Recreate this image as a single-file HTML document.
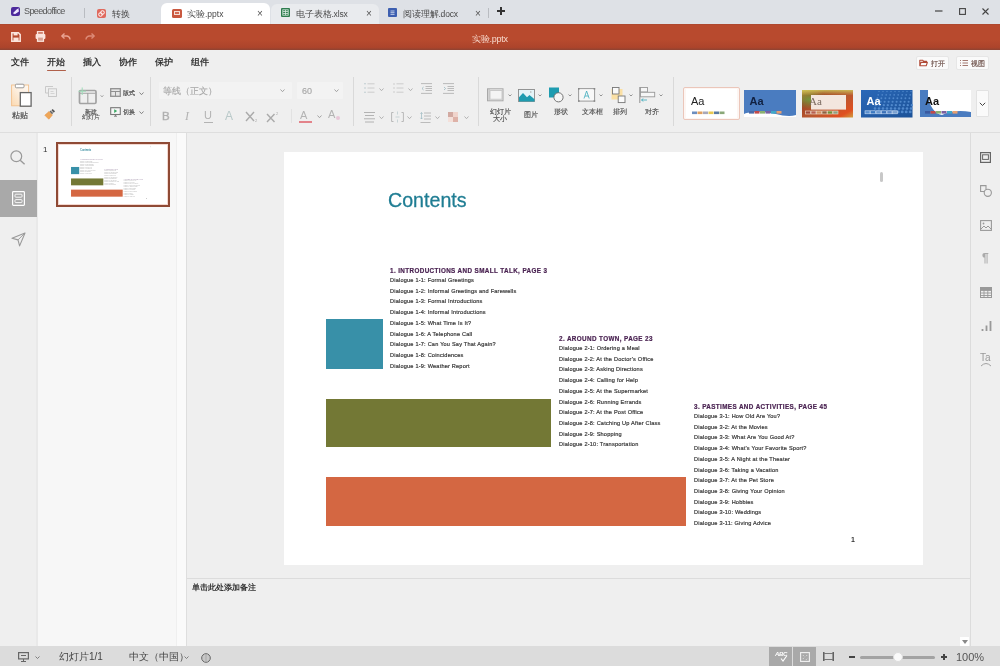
<!DOCTYPE html>
<html><head><meta charset="utf-8">
<style>
*{box-sizing:border-box;margin:0;padding:0}
html,body{width:1000px;height:666px;overflow:hidden;background:#efefef;font-family:"Liberation Sans",sans-serif;position:relative}
.a{position:absolute}
svg{position:absolute;overflow:visible}
/* tab bar */
#tabbar{left:0;top:0;width:1000px;height:24px;background:#dee1e6}
.tt{font-size:8.5px;color:#4a4a4a;white-space:nowrap;line-height:12px}
.x{font-size:10px;color:#555;line-height:10px}
#red{left:0;top:24px;width:1000px;height:26px;background:linear-gradient(#a44630 0,#b84a2e 1px,#b84a2e 60%,#ac442b 90%,#8e4332 100%)}
#ribbon{left:0;top:50px;width:1000px;height:83px;background:#efefef;border-bottom:1px solid #dedede}
.menu{font-size:9.3px;color:#262626;top:55.5px;line-height:12px;-webkit-text-stroke:0.25px #262626}
.rt{font-size:8px;color:#505050;line-height:8px;white-space:nowrap;-webkit-text-stroke:0.15px currentColor}
.sep{width:1px;background:#d9d9d9}
.sh{font-size:6.3px;line-height:8px;font-weight:bold;letter-spacing:0.39px;color:#4a2352;white-space:nowrap;-webkit-text-stroke:0.2px #4a2352}
.sl{font-size:5.6px;line-height:10.7px;letter-spacing:0.2px;color:#3a3a3a;white-space:nowrap;-webkit-text-stroke:0.2px #3a3a3a}
.thumb .sl{color:#a8a8a8;-webkit-text-stroke:0}
.thumb .sh{color:#a898b0;-webkit-text-stroke:0}
.thumb .ct{color:#6aaebe;-webkit-text-stroke:0}
.chev{font-size:7px;color:#777}
</style></head><body><div id="root" class="a" style="left:0;top:0;width:1000px;height:666px;will-change:transform">
<!-- TAB BAR -->
<div id="tabbar" class="a"></div>
<!-- speedoffice tab -->
<div class="a" style="left:11px;top:7px;width:9px;height:9px;border-radius:2px;background:#4d2a9c"></div><svg style="left:11px;top:7px" width="9" height="9"><path d="M2.5 6.5L6.5 2.5M3.5 6.8l3.5-4.5 0.3 2z" stroke="#f0e8ff" stroke-width="1.1" fill="#f0e8ff"/></svg>
<div class="a tt" style="left:24px;top:5px;font-size:9px;letter-spacing:-0.6px;color:#555">Speedoffice</div>
<div class="a" style="left:84px;top:8px;width:1px;height:10px;background:#b9bcc1"></div>
<!-- 转换 -->
<div class="a" style="left:97px;top:9px;width:9px;height:9px;border-radius:2px;background:#e06a5e"></div><svg style="left:97px;top:9px" width="9" height="9"><circle cx="3.5" cy="5.5" r="1.8" fill="none" stroke="#fff" stroke-width="1"/><circle cx="5.5" cy="3.5" r="1.8" fill="none" stroke="#fff" stroke-width="1"/></svg>
<div class="a tt" style="left:112px;top:7.5px">转换</div>
<!-- active tab -->
<div class="a" style="left:161px;top:3px;width:109px;height:21px;background:#fff;border-radius:6px 6px 0 0"></div>
<div class="a" style="left:172px;top:8.5px;width:9.5px;height:9px;border-radius:1.5px;background:#c9583f"></div>
<div class="a" style="left:174px;top:10.5px;width:5.5px;height:4.5px;background:#d46a52;border:1px solid #f6ddd5"></div>
<div class="a tt" style="left:187px;top:7.5px">实验.pptx</div>
<div class="a x" style="left:257px;top:9px">×</div>
<!-- xlsx tab hover -->
<div class="a" style="left:271px;top:4px;width:108px;height:20px;background:#e9ebee;border-radius:6px 6px 0 0"></div>
<div class="a" style="left:281px;top:8px;width:9px;height:9px;border-radius:1px;background:#2f7d4f"></div><svg style="left:281px;top:8px" width="9" height="9"><path d="M2 3.5h5M2 5.5h5M4.5 2v5" stroke="#d8eadf" stroke-width="0.8"/><rect x="1.8" y="1.8" width="5.4" height="5.4" fill="none" stroke="#d8eadf" stroke-width="0.8"/></svg>
<div class="a tt" style="left:296px;top:7.5px;letter-spacing:-0.15px">电子表格.xlsx</div>
<div class="a x" style="left:366px;top:9px">×</div>
<!-- docx tab -->
<div class="a" style="left:388px;top:8px;width:9px;height:9px;border-radius:1px;background:#3d5fb0"></div><svg style="left:388px;top:8px" width="9" height="9"><path d="M2.5 3h4M2.5 4.7h4M2.5 6.4h4" stroke="#e0e6f4" stroke-width="0.8"/></svg>
<div class="a tt" style="left:403px;top:7.5px;letter-spacing:-0.15px">阅读理解.docx</div>
<div class="a x" style="left:475px;top:9px">×</div>
<div class="a" style="left:488px;top:8px;width:1px;height:10px;background:#b9bcc1"></div>
<div class="a" style="left:497px;top:10px;width:8px;height:1.6px;background:#333"></div><div class="a" style="left:500.2px;top:6.8px;width:1.6px;height:8px;background:#333"></div>
<!-- window controls -->
<svg style="left:934.5px;top:9.5px" width="8" height="2" viewBox="0 0 8 2"><path d="M0 1h7.5" stroke="#444" stroke-width="1.2"/></svg>
<svg style="left:958.5px;top:7.5px" width="7" height="7" viewBox="0 0 7 7"><rect x="0.6" y="0.6" width="5.8" height="5.8" fill="none" stroke="#444" stroke-width="1.1"/></svg>
<svg style="left:982px;top:7.5px" width="7" height="7" viewBox="0 0 7 7"><path d="M0.5 0.5l6 6M6.5 0.5l-6 6" stroke="#444" stroke-width="1.1"/></svg>
<!-- RED BAR -->
<div id="red" class="a"></div>
<div class="a" style="left:472px;top:32.5px;font-size:9px;letter-spacing:-0.25px;color:#f7d9cc;line-height:12px">实验.pptx</div>


<svg style="left:11px;top:32px" width="10" height="10" viewBox="0 0 10 10"><path d="M0.8 0.8h6.6l1.8 1.8v6.6H0.8z" fill="none" stroke="#fbe4dc" stroke-width="1.5"/><rect x="2.6" y="0.8" width="4" height="2.6" fill="#fbe4dc"/><rect x="2.4" y="5.6" width="5.2" height="3.6" fill="#fbe4dc"/></svg>
<svg style="left:35px;top:31px" width="11" height="11" viewBox="0 0 11 11"><rect x="2.5" y="0.7" width="6" height="2.5" fill="none" stroke="#fbe4dc" stroke-width="1.3"/><rect x="0.6" y="3" width="9.8" height="5" rx="1" fill="#fbe4dc"/><rect x="2.5" y="6" width="6" height="4.3" fill="#d8a090" stroke="#fbe4dc" stroke-width="1.2"/></svg>
<svg style="left:61px;top:33px" width="10" height="7" viewBox="0 0 10 7"><path d="M3.5 0.5L0.8 3 3.5 5.5" fill="none" stroke="#eaa594" stroke-width="1.4" stroke-linejoin="round"/><path d="M1 3h4.5a3.5 3.5 0 0 1 3.5 3.5" fill="none" stroke="#eaa594" stroke-width="1.4"/></svg>
<svg style="left:84.5px;top:33px" width="10" height="7" viewBox="0 0 10 7"><path d="M6.5 0.5L9.2 3 6.5 5.5" fill="none" stroke="#dd8c78" stroke-width="1.4" stroke-linejoin="round"/><path d="M9 3H4.5A3.5 3.5 0 0 0 1 6.5" fill="none" stroke="#dd8c78" stroke-width="1.4"/></svg>

<!-- RIBBON -->
<div id="ribbon" class="a"></div>
<div class="a menu" style="left:11px">文件</div>
<div class="a menu" style="left:46.8px">开始</div>
<div class="a" style="left:47px;top:69.8px;width:18.5px;height:1.6px;background:#b0604a;border-radius:1px"></div>
<div class="a menu" style="left:83.3px">插入</div>
<div class="a menu" style="left:119px">协作</div>
<div class="a menu" style="left:154.8px">保护</div>
<div class="a menu" style="left:191px">组件</div>


<!-- right buttons -->
<div class="a" style="left:916px;top:56px;width:33px;height:14px;background:#fafafa;border:1px solid #e6e6e6;border-radius:2px"></div>
<svg style="left:919px;top:58.5px" width="9" height="8" viewBox="0 0 9 8"><path d="M0.8 6.8V1.2h2.8l1 1.2h3v1.2M0.8 6.8h6.4l1.2-3.4H2z" fill="none" stroke="#b04a36" stroke-width="1.1" stroke-linejoin="round"/></svg>
<div class="a rt" style="left:931px;top:59.5px;font-size:7.3px;color:#6a4d46">打开</div>
<div class="a" style="left:956px;top:56px;width:33px;height:14px;background:#fafafa;border:1px solid #e6e6e6;border-radius:2px"></div>
<svg style="left:960px;top:58.5px" width="8" height="8" viewBox="0 0 8 8"><path d="M0 1.5h1M2.5 1.5H8M0 4h1M2.5 4H8M0 6.5h1M2.5 6.5H8" stroke="#9a6a60" stroke-width="0.9"/></svg>
<div class="a rt" style="left:971px;top:59.5px;font-size:7.3px;color:#6a4d46">视图</div>

<!-- clipboard group -->
<svg style="left:10px;top:83px" width="23" height="25" viewBox="0 0 23 25">
 <defs><linearGradient id="cb" x1="0" y1="1" x2="1" y2="0"><stop offset="0" stop-color="#fbd9b0"/><stop offset="0.6" stop-color="#fdf1e4"/><stop offset="1" stop-color="#fff8f0"/></linearGradient></defs>
 <rect x="1.6" y="2" width="17" height="20.8" fill="url(#cb)" stroke="#f2c08c" stroke-width="0.9"/>
 <rect x="5.4" y="1.2" width="8.6" height="3.6" rx="1" fill="#fff" stroke="#999" stroke-width="1"/>
 <rect x="10.3" y="9.6" width="10.8" height="13.6" fill="#fff" stroke="#666" stroke-width="1.3"/>
</svg>
<div class="a rt" style="left:12px;top:111px;font-size:8px;line-height:10px;color:#444;-webkit-text-stroke:0.15px #444">粘贴</div>
<svg style="left:45px;top:86px" width="12" height="11" viewBox="0 0 12 11"><path d="M8 0.5H0.5V7H3" fill="none" stroke="#c4c4c4" stroke-width="0.9"/><rect x="3.5" y="2.8" width="8" height="7.7" fill="none" stroke="#c4c4c4" stroke-width="0.9"/><path d="M5.5 5.5h3M5.5 7.5h4" stroke="#c8c8c8" stroke-width="0.7"/></svg>
<svg style="left:44px;top:108px" width="12" height="12" viewBox="0 0 12 12"><path d="M0.8 7.2L5 3.6 8.4 7 4.8 11.2z" fill="#eea658" stroke="#e69446" stroke-width="0.6"/><path d="M6 3l2.6 2.6" stroke="#666" stroke-width="1.6"/><path d="M8 1.6l2.4 2.4" stroke="#555" stroke-width="1.8"/></svg>
<div class="a sep" style="left:71px;top:77px;height:49px"></div>

<!-- slide group -->
<svg style="left:78px;top:87px" width="20" height="18" viewBox="0 0 20 18">
 <rect x="1.5" y="3.5" width="16.5" height="13" rx="1.2" fill="#efefef" stroke="#a2a2a2" stroke-width="1.7"/>
 <path d="M2 6.2h15.5M9.8 6.2v10" stroke="#a2a2a2" stroke-width="1.1"/>
 <path d="M4.2 0.5v7.5M0.5 4.2h7.5" stroke="#9ddcb8" stroke-width="1"/>
</svg>
<div class="a rt" style="left:84.5px;top:107.5px;font-size:6.3px;line-height:7px;color:#555;-webkit-text-stroke:0.15px #555">新建</div><div class="a rt" style="left:81.5px;top:113.3px;font-size:6.3px;line-height:7px;color:#555;-webkit-text-stroke:0.15px #555">幻灯片</div>
<svg style="left:110px;top:88px" width="11" height="9" viewBox="0 0 11 9"><rect x="0.7" y="0.7" width="9.6" height="7.6" fill="#e6e6e6" stroke="#909090" stroke-width="1.3"/><path d="M1 3.5h9M5.5 3.5v4.5" stroke="#909090" stroke-width="1"/></svg>
<div class="a rt" style="left:122.5px;top:89px;font-size:6.4px;line-height:8px;color:#555;-webkit-text-stroke:0.2px #555">版式</div>
<svg style="left:110px;top:107px" width="11" height="10" viewBox="0 0 11 10"><rect x="0.7" y="0.7" width="9.6" height="6.8" fill="#f6f6f6" stroke="#777" stroke-width="1.1"/><path d="M4.2 2.2l3 1.9-3 1.9z" fill="#3aa864"/><path d="M5.5 7.5v1.5M4 9.2h3" stroke="#777" stroke-width="0.9"/></svg>
<div class="a rt" style="left:122.5px;top:108px;font-size:6.4px;line-height:8px;color:#555;-webkit-text-stroke:0.2px #555">切换</div>
<svg style="left:99.5px;top:94.5px" width="4" height="2.2" viewBox="0 0 4 2.2"><path d="M0.5 0.5L2.0 1.7L3.5 0.5" fill="none" stroke="#999" stroke-width="0.9"/></svg>
<svg style="left:138.5px;top:91.5px" width="5" height="3.2" viewBox="0 0 5 3.2"><path d="M0.5 0.5L2.5 2.7L4.5 0.5" fill="none" stroke="#777" stroke-width="0.9"/></svg>
<svg style="left:138.5px;top:111px" width="5" height="3.2" viewBox="0 0 5 3.2"><path d="M0.5 0.5L2.5 2.7L4.5 0.5" fill="none" stroke="#777" stroke-width="0.9"/></svg>
<div class="a sep" style="left:150px;top:77px;height:49px"></div>

<!-- font group -->
<div class="a" style="left:159px;top:82px;width:133px;height:17px;background:#f3f3f3;border-radius:1px"></div>
<div class="a rt" style="left:163px;top:86px;font-size:9px;line-height:10px;color:#a8a8a8">等线（正文）</div>
<svg style="left:280px;top:89px" width="5" height="3.2" viewBox="0 0 5 3.2"><path d="M0.5 0.5L2.5 2.7L4.5 0.5" fill="none" stroke="#999" stroke-width="0.9"/></svg>
<div class="a" style="left:297px;top:82px;width:46px;height:17px;background:#f3f3f3;border-radius:1px"></div>
<div class="a rt" style="left:302px;top:86px;font-size:9px;line-height:10px;color:#a8a8a8">60</div>
<svg style="left:334px;top:89px" width="5" height="3.2" viewBox="0 0 5 3.2"><path d="M0.5 0.5L2.5 2.7L4.5 0.5" fill="none" stroke="#999" stroke-width="0.9"/></svg>
<div class="a" style="left:162px;top:110px;font-size:11.5px;line-height:13px;color:#b0b0b0;font-weight:normal;-webkit-text-stroke:0.4px #b0b0b0">B</div>
<div class="a" style="left:185px;top:110px;font-size:12px;line-height:13px;color:#b3b3b3;font-family:'Liberation Serif',serif;font-style:italic">I</div>
<div class="a" style="left:204px;top:109px;font-size:11px;line-height:13px;color:#b3b3b3">U</div>
<div class="a" style="left:204px;top:122px;width:9px;height:1px;background:#b3b3b3"></div>
<div class="a" style="left:225px;top:110px;font-size:12px;line-height:13px;color:#b9c9c9">A</div>
<svg style="left:245px;top:111px" width="14" height="12" viewBox="0 0 14 12"><path d="M1 1l8 9M9 1l-8 9" stroke="#aaa" stroke-width="1.4"/><text x="10" y="11" font-size="4" fill="#aaa" font-family="Liberation Sans">2</text></svg>
<svg style="left:266px;top:111px" width="14" height="12" viewBox="0 0 14 12"><path d="M1 3l7.5 8M8.5 3l-7.5 8" stroke="#aaa" stroke-width="1.4"/><text x="10" y="4" font-size="4" fill="#aaa" font-family="Liberation Sans">2</text></svg>
<div class="a sep" style="left:291px;top:109px;height:14px;background:#e2e2e2"></div>
<div class="a" style="left:300px;top:109px;font-size:11px;line-height:12px;color:#b3b3b3">A</div>
<div class="a" style="left:299px;top:121px;width:13px;height:2px;background:#e3838a"></div>
<svg style="left:316.5px;top:115px" width="5" height="3.2" viewBox="0 0 5 3.2"><path d="M0.5 0.5L2.5 2.7L4.5 0.5" fill="none" stroke="#999" stroke-width="0.9"/></svg>
<div class="a" style="left:328px;top:108px;font-size:11px;line-height:12px;color:#b3b3b3">A</div>
<div class="a" style="left:336px;top:116px;width:4px;height:4px;border-radius:2px;background:#e8c8d8"></div>
<div class="a sep" style="left:353px;top:77px;height:49px"></div>

<!-- paragraph group -->
<svg style="left:364px;top:83px" width="11" height="10" viewBox="0 0 11 10"><path d="M3.5 0.8h7M3.5 5h7M3.5 9.2h7" stroke="#c4c4c4" stroke-width="0.8"/><circle cx="1" cy="0.8" r="0.8" fill="#b8c8cc"/><circle cx="1" cy="5" r="0.8" fill="#b8c8cc"/><circle cx="1" cy="9.2" r="0.8" fill="#b8c8cc"/></svg>
<svg style="left:393px;top:83px" width="11" height="10" viewBox="0 0 11 10"><path d="M3.5 0.8h7M3.5 5h7M3.5 9.2h7" stroke="#c4c4c4" stroke-width="0.8"/><path d="M1 0v2M1 4v2M1 8v2" stroke="#c0c0c0" stroke-width="0.7"/></svg>
<svg style="left:421px;top:83px" width="11" height="11" viewBox="0 0 11 11"><path d="M0 0.6h11M4.5 3.5h6.5M4.5 5.5h6.5M4.5 7.5h6.5M0 10.4h11" stroke="#b4b4b4" stroke-width="0.9"/><path d="M2.6 4L1 5.5 2.6 7" fill="none" stroke="#9ab8c0" stroke-width="0.8"/></svg>
<svg style="left:443px;top:83px" width="11" height="11" viewBox="0 0 11 11"><path d="M0 0.6h11M4.5 3.5h6.5M4.5 5.5h6.5M4.5 7.5h6.5M0 10.4h11" stroke="#b4b4b4" stroke-width="0.9"/><path d="M1 4L2.6 5.5 1 7" fill="none" stroke="#9ab8c0" stroke-width="0.8"/></svg>
<svg style="left:363px;top:112px" width="13" height="11" viewBox="0 0 13 11"><path d="M1 0.5h11M2 3.5h9M1 6.8h11M2 10h9" stroke="#ababab" stroke-width="0.9"/></svg>
<svg style="left:391px;top:111px" width="13" height="12" viewBox="0 0 13 12"><path d="M2.5 1.5H0.6v9h1.9M10.5 1.5h1.9v9h-1.9" fill="none" stroke="#b8b8b8" stroke-width="1"/><path d="M6.5 0.5v3M6.5 8.5v3M4.5 6h4" stroke="#b8c8cc" stroke-width="0.7"/></svg>
<svg style="left:420px;top:112px" width="11" height="11" viewBox="0 0 11 11"><path d="M4 1h7M4 4h7M4 7h7M0.5 10.5h10" stroke="#b4b4b4" stroke-width="0.9"/><path d="M1.5 0.5v6.5M0.4 1.8l1.1-1.2 1.1 1.2M0.4 5.8l1.1 1.2 1.1-1.2" fill="none" stroke="#9ab8c0" stroke-width="0.7"/></svg>
<svg style="left:448px;top:112px" width="11" height="11" viewBox="0 0 11 11"><rect x="0" y="0" width="5" height="5" fill="#d2aaa2"/><rect x="5" y="0" width="5" height="5" fill="#f0d4cc"/><rect x="0" y="5" width="5" height="5" fill="#f4e0da"/><rect x="5" y="5" width="5" height="5" fill="#deb2a8"/></svg>
<svg style="left:378.5px;top:87.5px" width="5" height="3.2" viewBox="0 0 5 3.2"><path d="M0.5 0.5L2.5 2.7L4.5 0.5" fill="none" stroke="#aaa" stroke-width="0.9"/></svg>
<svg style="left:407.5px;top:87.5px" width="5" height="3.2" viewBox="0 0 5 3.2"><path d="M0.5 0.5L2.5 2.7L4.5 0.5" fill="none" stroke="#aaa" stroke-width="0.9"/></svg>
<svg style="left:378.5px;top:116px" width="5" height="3.2" viewBox="0 0 5 3.2"><path d="M0.5 0.5L2.5 2.7L4.5 0.5" fill="none" stroke="#aaa" stroke-width="0.9"/></svg>
<svg style="left:407px;top:116px" width="5" height="3.2" viewBox="0 0 5 3.2"><path d="M0.5 0.5L2.5 2.7L4.5 0.5" fill="none" stroke="#aaa" stroke-width="0.9"/></svg>
<svg style="left:435px;top:116px" width="5" height="3.2" viewBox="0 0 5 3.2"><path d="M0.5 0.5L2.5 2.7L4.5 0.5" fill="none" stroke="#aaa" stroke-width="0.9"/></svg>
<svg style="left:463.5px;top:116px" width="5" height="3.2" viewBox="0 0 5 3.2"><path d="M0.5 0.5L2.5 2.7L4.5 0.5" fill="none" stroke="#aaa" stroke-width="0.9"/></svg>
<div class="a sep" style="left:478px;top:77px;height:49px"></div>

<!-- insert group -->
<svg style="left:487px;top:88px" width="17" height="14" viewBox="0 0 17 14"><rect x="0.5" y="0.8" width="15.5" height="12" fill="#ececec" stroke="#a8a8a8" stroke-width="1"/><rect x="3" y="2.6" width="12" height="8.6" fill="#f4f4f4" stroke="#c0c0c0" stroke-width="0.8"/><path d="M2 1v12" stroke="#b0b0b0" stroke-width="0.9"/></svg>
<svg style="left:507.5px;top:94px" width="4" height="2.5" viewBox="0 0 4 2.5"><path d="M0.5 0.5L2.0 2.0L3.5 0.5" fill="none" stroke="#888" stroke-width="0.9"/></svg>
<div class="a rt" style="left:489px;top:108px;font-size:7px;line-height:7px;width:22px;text-align:center">幻灯片<br>大小</div>
<svg style="left:518px;top:89px" width="17" height="13" viewBox="0 0 17 13"><rect x="0.5" y="0.5" width="16" height="12" fill="#e4f4f8" stroke="#8a8a8a" stroke-width="0.9"/><path d="M1 12.5V8.2L5 4l4 4.2 2.5-2.2 5 4.2v2.3z" fill="#1e9cb0"/><circle cx="12.8" cy="3" r="0.8" fill="#aaa"/></svg>
<svg style="left:537.5px;top:94px" width="4" height="2.5" viewBox="0 0 4 2.5"><path d="M0.5 0.5L2.0 2.0L3.5 0.5" fill="none" stroke="#888" stroke-width="0.9"/></svg>
<div class="a rt" style="left:524px;top:111px;font-size:7px;line-height:7px">图片</div>
<svg style="left:548px;top:87px" width="17" height="17" viewBox="0 0 17 17"><rect x="1" y="0.5" width="10" height="10" fill="#1e9cb0"/><circle cx="10.5" cy="10.3" r="4.6" fill="#f6f6f6" stroke="#666" stroke-width="0.9"/></svg>
<svg style="left:567.5px;top:94px" width="4" height="2.5" viewBox="0 0 4 2.5"><path d="M0.5 0.5L2.0 2.0L3.5 0.5" fill="none" stroke="#888" stroke-width="0.9"/></svg>
<div class="a rt" style="left:554px;top:108px;font-size:7px;line-height:7px">形状</div>
<svg style="left:577.5px;top:88px" width="18" height="14" viewBox="0 0 18 14"><rect x="0.6" y="0.6" width="16" height="12.5" fill="#f8f8f8" stroke="#9a9a9a" stroke-width="1"/><rect x="0" y="0" width="1.6" height="1.6" fill="#888"/><rect x="15.6" y="0" width="1.6" height="1.6" fill="#888"/><rect x="0" y="12.2" width="1.6" height="1.6" fill="#888"/><rect x="15.6" y="12.2" width="1.6" height="1.6" fill="#888"/><path d="M6 10.5l2.6-7.5 2.6 7.5M7 8h3.2" fill="none" stroke="#3aaabb" stroke-width="0.8"/></svg>
<svg style="left:598.5px;top:94px" width="4" height="2.5" viewBox="0 0 4 2.5"><path d="M0.5 0.5L2.0 2.0L3.5 0.5" fill="none" stroke="#888" stroke-width="0.9"/></svg>
<div class="a rt" style="left:582px;top:108px;font-size:7px;line-height:7px">文本框</div>
<svg style="left:610.5px;top:87px" width="15" height="16" viewBox="0 0 15 16"><rect x="0.5" y="2" width="11" height="10.5" fill="#fbe0a4"/><rect x="1.5" y="0.5" width="6.5" height="6.5" fill="#fafafa" stroke="#777" stroke-width="0.9"/><rect x="7.2" y="9" width="6.8" height="6.6" fill="#fafafa" stroke="#777" stroke-width="0.9"/></svg>
<svg style="left:628.5px;top:94px" width="4" height="2.5" viewBox="0 0 4 2.5"><path d="M0.5 0.5L2.0 2.0L3.5 0.5" fill="none" stroke="#888" stroke-width="0.9"/></svg>
<div class="a rt" style="left:613px;top:108px;font-size:7px;line-height:7px">排列</div>
<svg style="left:639px;top:87px" width="17" height="16" viewBox="0 0 17 16"><path d="M0.8 0v16" stroke="#999" stroke-width="1.1"/><rect x="1.5" y="0.5" width="7" height="4.5" fill="#f6f6f6" stroke="#999" stroke-width="0.9"/><rect x="1.5" y="5.3" width="14.2" height="4.5" fill="#f6f6f6" stroke="#999" stroke-width="0.9"/><path d="M2.5 13h5.5M4.3 11.6L2.5 13 4.3 14.4" fill="none" stroke="#3aaabb" stroke-width="0.8"/></svg>
<svg style="left:658.5px;top:94px" width="4" height="2.5" viewBox="0 0 4 2.5"><path d="M0.5 0.5L2.0 2.0L3.5 0.5" fill="none" stroke="#888" stroke-width="0.9"/></svg>
<div class="a rt" style="left:645px;top:108px;font-size:7px;line-height:7px">对齐</div>
<div class="a sep" style="left:673px;top:77px;height:49px"></div>


<!-- themes -->
<div class="a" style="left:683px;top:87px;width:57px;height:33px;border:1.5px solid #ebc6ba;border-radius:2px;background:#fdf6f3"></div>
<svg style="left:686px;top:89px" width="51" height="29" viewBox="0 0 51 29"><rect width="51" height="29" fill="#fff"/>
<text x="5" y="15.5" font-family="Liberation Sans" font-size="11" fill="#222">Aa</text><rect x="6.0" y="22.5" width="5" height="2.6" fill="#6c8ebf"/><rect x="11.5" y="22.5" width="5" height="2.6" fill="#e0a060"/><rect x="17.0" y="22.5" width="5" height="2.6" fill="#a8a8b8"/><rect x="22.5" y="22.5" width="5" height="2.6" fill="#e8c850"/><rect x="28.0" y="22.5" width="5" height="2.6" fill="#5a7aa0"/><rect x="33.5" y="22.5" width="5" height="2.6" fill="#8aa878"/></svg>
<svg style="left:744px;top:90px" width="52" height="27" viewBox="0 0 52 27"><rect width="52" height="27" fill="#fff"/>
<path d="M0 0H52V25C40 29 25 20 10 22 5 22.5 2 23 0 24z" fill="#4a7cc0"/>
<text x="5.5" y="14.5" font-family="Liberation Sans" font-size="11" font-weight="bold" fill="#102040">Aa</text><rect x="5.0" y="21" width="5" height="2.6" fill="#4a6aa8"/><rect x="10.5" y="21" width="5" height="2.6" fill="#c04a4a"/><rect x="16.0" y="21" width="5" height="2.6" fill="#8ab070"/><rect x="21.5" y="21" width="5" height="2.6" fill="#7a60a0"/><rect x="27.0" y="21" width="5" height="2.6" fill="#40a8c8"/><rect x="32.5" y="21" width="5" height="2.6" fill="#e8a070"/></svg>
<svg style="left:802px;top:90px" width="51" height="27.5" viewBox="0 0 51 27.5">
<defs><linearGradient id="g3a" x1="0" y1="0" x2="1" y2="1"><stop offset="0" stop-color="#c09030"/><stop offset="0.25" stop-color="#a04020"/><stop offset="0.55" stop-color="#b85830"/><stop offset="0.85" stop-color="#e05020"/><stop offset="1" stop-color="#d0a040"/></linearGradient>
<radialGradient id="g3b" cx="0.15" cy="0.35" r="0.35"><stop offset="0" stop-color="#70a040" stop-opacity="0.9"/><stop offset="1" stop-color="#70a040" stop-opacity="0"/></radialGradient>
<linearGradient id="g3c" x1="0" y1="0" x2="0" y2="1"><stop offset="0" stop-color="#d0d060" stop-opacity="0.8"/><stop offset="0.2" stop-color="#d0d060" stop-opacity="0"/></linearGradient></defs>
<rect width="51" height="27.5" fill="url(#g3a)"/><rect width="51" height="27.5" fill="url(#g3b)"/><rect width="51" height="27.5" fill="url(#g3c)"/>
<rect x="9" y="5" width="35" height="14.6" fill="#f3e6de"/>
<text x="7" y="15" font-family="Liberation Serif" font-size="11" fill="#7a6a60">Aa</text><rect x="3.5" y="21" width="5" height="3" fill="#a04a3a" stroke="#f0e0d0" stroke-width="0.6"/><rect x="9.0" y="21" width="5" height="3" fill="#b86050" stroke="#f0e0d0" stroke-width="0.6"/><rect x="14.5" y="21" width="5" height="3" fill="#d09060" stroke="#f0e0d0" stroke-width="0.6"/><rect x="20.0" y="21" width="5" height="3" fill="#906040" stroke="#f0e0d0" stroke-width="0.6"/><rect x="25.5" y="21" width="5" height="3" fill="#70903a" stroke="#f0e0d0" stroke-width="0.6"/><rect x="31.0" y="21" width="5" height="3" fill="#90a080" stroke="#f0e0d0" stroke-width="0.6"/></svg>
<svg style="left:860.5px;top:90px" width="51.5" height="27.5" viewBox="0 0 51.5 27.5">
<defs><linearGradient id="g4" x1="0" y1="0" x2="1" y2="1"><stop offset="0" stop-color="#2a68b8"/><stop offset="1" stop-color="#1c5298"/></linearGradient></defs>
<rect width="51.5" height="27.5" fill="url(#g4)"/><circle cx="18.0" cy="1.5" r="0.70" fill="#4f88cc"/><circle cx="22.0" cy="1.5" r="0.70" fill="#4f88cc"/><circle cx="26.0" cy="1.5" r="0.70" fill="#4f88cc"/><circle cx="30.0" cy="1.5" r="0.70" fill="#4f88cc"/><circle cx="34.0" cy="1.5" r="0.70" fill="#4f88cc"/><circle cx="38.0" cy="1.5" r="0.70" fill="#4f88cc"/><circle cx="42.0" cy="1.5" r="0.70" fill="#4f88cc"/><circle cx="46.0" cy="1.5" r="0.70" fill="#4f88cc"/><circle cx="50.0" cy="1.5" r="0.70" fill="#4f88cc"/><circle cx="17.2" cy="4.9" r="0.82" fill="#4f88cc"/><circle cx="21.2" cy="4.9" r="0.82" fill="#4f88cc"/><circle cx="25.2" cy="4.9" r="0.82" fill="#4f88cc"/><circle cx="29.2" cy="4.9" r="0.82" fill="#4f88cc"/><circle cx="33.2" cy="4.9" r="0.82" fill="#4f88cc"/><circle cx="37.2" cy="4.9" r="0.82" fill="#4f88cc"/><circle cx="41.2" cy="4.9" r="0.82" fill="#4f88cc"/><circle cx="45.2" cy="4.9" r="0.82" fill="#4f88cc"/><circle cx="49.2" cy="4.9" r="0.82" fill="#4f88cc"/><circle cx="16.4" cy="8.3" r="0.94" fill="#4f88cc"/><circle cx="20.4" cy="8.3" r="0.94" fill="#4f88cc"/><circle cx="24.4" cy="8.3" r="0.94" fill="#4f88cc"/><circle cx="28.4" cy="8.3" r="0.94" fill="#4f88cc"/><circle cx="32.4" cy="8.3" r="0.94" fill="#4f88cc"/><circle cx="36.4" cy="8.3" r="0.94" fill="#4f88cc"/><circle cx="40.4" cy="8.3" r="0.94" fill="#4f88cc"/><circle cx="44.4" cy="8.3" r="0.94" fill="#4f88cc"/><circle cx="48.4" cy="8.3" r="0.94" fill="#4f88cc"/><circle cx="15.6" cy="11.7" r="1.06" fill="#4f88cc"/><circle cx="19.6" cy="11.7" r="1.06" fill="#4f88cc"/><circle cx="23.6" cy="11.7" r="1.06" fill="#4f88cc"/><circle cx="27.6" cy="11.7" r="1.06" fill="#4f88cc"/><circle cx="31.6" cy="11.7" r="1.06" fill="#4f88cc"/><circle cx="35.6" cy="11.7" r="1.06" fill="#4f88cc"/><circle cx="39.6" cy="11.7" r="1.06" fill="#4f88cc"/><circle cx="43.6" cy="11.7" r="1.06" fill="#4f88cc"/><circle cx="47.6" cy="11.7" r="1.06" fill="#4f88cc"/><circle cx="14.8" cy="15.1" r="1.18" fill="#4f88cc"/><circle cx="18.8" cy="15.1" r="1.18" fill="#4f88cc"/><circle cx="22.8" cy="15.1" r="1.18" fill="#4f88cc"/><circle cx="26.8" cy="15.1" r="1.18" fill="#4f88cc"/><circle cx="30.8" cy="15.1" r="1.18" fill="#4f88cc"/><circle cx="34.8" cy="15.1" r="1.18" fill="#4f88cc"/><circle cx="38.8" cy="15.1" r="1.18" fill="#4f88cc"/><circle cx="42.8" cy="15.1" r="1.18" fill="#4f88cc"/><circle cx="46.8" cy="15.1" r="1.18" fill="#4f88cc"/><circle cx="50.8" cy="15.1" r="1.18" fill="#4f88cc"/><circle cx="14.0" cy="18.5" r="1.30" fill="#4f88cc"/><circle cx="18.0" cy="18.5" r="1.30" fill="#4f88cc"/><circle cx="22.0" cy="18.5" r="1.30" fill="#4f88cc"/><circle cx="26.0" cy="18.5" r="1.30" fill="#4f88cc"/><circle cx="30.0" cy="18.5" r="1.30" fill="#4f88cc"/><circle cx="34.0" cy="18.5" r="1.30" fill="#4f88cc"/><circle cx="38.0" cy="18.5" r="1.30" fill="#4f88cc"/><circle cx="42.0" cy="18.5" r="1.30" fill="#4f88cc"/><circle cx="46.0" cy="18.5" r="1.30" fill="#4f88cc"/><circle cx="50.0" cy="18.5" r="1.30" fill="#4f88cc"/><circle cx="13.2" cy="21.9" r="1.42" fill="#4f88cc"/><circle cx="17.2" cy="21.9" r="1.42" fill="#4f88cc"/><circle cx="21.2" cy="21.9" r="1.42" fill="#4f88cc"/><circle cx="25.2" cy="21.9" r="1.42" fill="#4f88cc"/><circle cx="29.2" cy="21.9" r="1.42" fill="#4f88cc"/><circle cx="33.2" cy="21.9" r="1.42" fill="#4f88cc"/><circle cx="37.2" cy="21.9" r="1.42" fill="#4f88cc"/><circle cx="41.2" cy="21.9" r="1.42" fill="#4f88cc"/><circle cx="45.2" cy="21.9" r="1.42" fill="#4f88cc"/><circle cx="49.2" cy="21.9" r="1.42" fill="#4f88cc"/>
<text x="5.5" y="14.5" font-family="Liberation Sans" font-size="11" font-weight="bold" fill="#fff">Aa</text><rect x="4.0" y="20.8" width="5" height="3" fill="#5a90d0" stroke="#c8dcf4" stroke-width="0.6"/><rect x="9.5" y="20.8" width="5" height="3" fill="#3a78c0" stroke="#c8dcf4" stroke-width="0.6"/><rect x="15.0" y="20.8" width="5" height="3" fill="#6a98d0" stroke="#c8dcf4" stroke-width="0.6"/><rect x="20.5" y="20.8" width="5" height="3" fill="#3a70b8" stroke="#c8dcf4" stroke-width="0.6"/><rect x="26.0" y="20.8" width="5" height="3" fill="#5a88c8" stroke="#c8dcf4" stroke-width="0.6"/><rect x="31.5" y="20.8" width="5" height="3" fill="#7aa0d0" stroke="#c8dcf4" stroke-width="0.6"/></svg>
<svg style="left:920px;top:90px" width="51" height="27" viewBox="0 0 51 27"><rect width="51" height="27" fill="#4a7cc0"/>
<path d="M8 0H51V22C40 20 30 21 22 25 14 24 10 15 8 8z" fill="#fff"/>
<text x="5" y="14.5" font-family="Liberation Sans" font-size="11" font-weight="bold" fill="#111">Aa</text><rect x="5.0" y="21" width="5" height="2.6" fill="#3a5aa0"/><rect x="10.5" y="21" width="5" height="2.6" fill="#c04a4a"/><rect x="16.0" y="21" width="5" height="2.6" fill="#8ab070"/><rect x="21.5" y="21" width="5" height="2.6" fill="#7a60a0"/><rect x="27.0" y="21" width="5" height="2.6" fill="#40a8c8"/><rect x="32.5" y="21" width="5" height="2.6" fill="#e8a070"/></svg>
<div class="a" style="left:976px;top:90px;width:13px;height:27px;background:#fafafa;border:1px solid #e2e2e2;border-radius:1px"></div>
<svg style="left:979px;top:102px" width="7" height="5" viewBox="0 0 7 5"><path d="M0.8 0.8L3.5 3.5 6.2 0.8" fill="none" stroke="#444" stroke-width="1"/></svg>

<!-- MAIN -->
<div class="a" style="left:0;top:133px;width:37px;height:513px;background:#efefef"></div>
<div class="a" style="left:36px;top:133px;width:2px;height:513px;background:#e9e9e9"></div>
<div class="a" style="left:38px;top:133px;width:138px;height:513px;background:#f7f7f7"></div>
<div class="a" style="left:176px;top:133px;width:10px;height:513px;background:#fafafa;border-left:1px solid #efefef"></div>
<div class="a" style="left:186px;top:133px;width:1px;height:513px;background:#dedede"></div>
<div class="a" style="left:970px;top:133px;width:1px;height:513px;background:#dcdcdc"></div>
<div class="a" style="left:187px;top:578px;width:783px;height:1px;background:#dcdcdc"></div>


<!-- left sidebar icons -->
<svg style="left:10px;top:150px" width="16" height="15" viewBox="0 0 16 15"><circle cx="6.3" cy="6.3" r="5.4" fill="none" stroke="#999" stroke-width="1.2"/><path d="M10.2 10.2L14.6 14.2" stroke="#999" stroke-width="1.4"/></svg>
<div class="a" style="left:0;top:180px;width:37px;height:37px;background:#a9a9a9"></div>
<svg style="left:12px;top:191px" width="13" height="15" viewBox="0 0 13 15"><rect x="0.6" y="0.6" width="11.8" height="13.8" rx="0.8" fill="none" stroke="#fff" stroke-width="1.2"/><rect x="3" y="3.2" width="7" height="3" rx="0.8" fill="none" stroke="#fff" stroke-width="0.9"/><rect x="3" y="8.6" width="7" height="3" rx="0.8" fill="none" stroke="#fff" stroke-width="0.9"/></svg>
<svg style="left:11px;top:232px" width="15" height="15" viewBox="0 0 15 15"><path d="M14 1L1 6.3l6 1.6 1.6 6z" fill="none" stroke="#999" stroke-width="1.1" stroke-linejoin="round"/><path d="M7 7.9L14 1" stroke="#999" stroke-width="0.9"/></svg>
<!-- thumbnail -->
<div class="a" style="left:43px;top:145.5px;font-size:8px;line-height:8px;color:#333">1</div>
<div class="a" style="left:56px;top:142px;width:114px;height:65px;border:2px solid #8f4a35;background:#fff"></div>
<div class="a" style="left:58px;top:144px;width:110px;height:61px;border:1px solid #f4d8d0"></div>
<div class="a thumb" style="left:64.8px;top:143.2px;width:639px;height:413px;transform:scale(0.1435);transform-origin:0 0">
<div class="a ct" style="left:104px;top:36px;font-size:21px;line-height:24px;letter-spacing:0;color:#1f7d93;-webkit-text-stroke:0.3px #1f7d93;transform:scaleX(0.935);transform-origin:0 0;white-space:nowrap">Contents</div>
<div class="a" style="left:42px;top:167px;width:57px;height:50px;background:#3890a8"></div>
<div class="a" style="left:42px;top:247px;width:225px;height:48px;background:#737835"></div>
<div class="a" style="left:42px;top:325px;width:360px;height:49px;background:#d46742"></div>
<div class="a" style="left:596px;top:20px;width:3px;height:10px;border-radius:1.5px;background:#c8c8c8"></div>
<div class="a" style="left:567px;top:384px;font-size:7px;line-height:8px;font-weight:bold;color:#333">1</div>
<div class="a sh" style="left:106px;top:114.5px">1. INTRODUCTIONS AND SMALL TALK, PAGE 3</div>
<div class="a sl" style="left:106px;top:123px">Dialogue 1-1: Formal Greetings<br>Dialogue 1-2: Informal Greetings and Farewells<br>Dialogue 1-3: Formal Introductions<br>Dialogue 1-4: Informal Introductions<br>Dialogue 1-5: What Time Is It?<br>Dialogue 1-6: A Telephone Call<br>Dialogue 1-7: Can You Say That Again?<br>Dialogue 1-8: Coincidences<br>Dialogue 1-9: Weather Report</div>
<div class="a sh" style="left:275px;top:182.5px">2. AROUND TOWN, PAGE 23</div>
<div class="a sl" style="left:275px;top:191px">Dialogue 2-1: Ordering a Meal<br>Dialogue 2-2: At the Doctor’s Office<br>Dialogue 2-3: Asking Directions<br>Dialogue 2-4: Calling for Help<br>Dialogue 2-5: At the Supermarket<br>Dialogue 2-6: Running Errands<br>Dialogue 2-7: At the Post Office<br>Dialogue 2-8: Catching Up After Class<br>Dialogue 2-9: Shopping<br>Dialogue 2-10: Transportation</div>
<div class="a sh" style="left:410px;top:250.5px">3. PASTIMES AND ACTIVITIES, PAGE 45</div>
<div class="a sl" style="left:410px;top:259px">Dialogue 3-1: How Old Are You?<br>Dialogue 3-2: At the Movies<br>Dialogue 3-3: What Are You Good At?<br>Dialogue 3-4: What’s Your Favorite Sport?<br>Dialogue 3-5: A Night at the Theater<br>Dialogue 3-6: Taking a Vacation<br>Dialogue 3-7: At the Pet Store<br>Dialogue 3-8: Giving Your Opinion<br>Dialogue 3-9: Hobbies<br>Dialogue 3-10: Weddings<br>Dialogue 3-11: Giving Advice</div>


</div>


<!-- slide content -->
<div class="a" id="slide" style="left:284px;top:152px;width:639px;height:413px;background:#fff">
<div class="a ct" style="left:104px;top:36px;font-size:21px;line-height:24px;letter-spacing:0;color:#1f7d93;-webkit-text-stroke:0.3px #1f7d93;transform:scaleX(0.935);transform-origin:0 0;white-space:nowrap">Contents</div>
<div class="a" style="left:42px;top:167px;width:57px;height:50px;background:#3890a8"></div>
<div class="a" style="left:42px;top:247px;width:225px;height:48px;background:#737835"></div>
<div class="a" style="left:42px;top:325px;width:360px;height:49px;background:#d46742"></div>
<div class="a" style="left:596px;top:20px;width:3px;height:10px;border-radius:1.5px;background:#c8c8c8"></div>
<div class="a" style="left:567px;top:384px;font-size:7px;line-height:8px;font-weight:bold;color:#333">1</div>
<div class="a sh" style="left:106px;top:114.5px">1. INTRODUCTIONS AND SMALL TALK, PAGE 3</div>
<div class="a sl" style="left:106px;top:123px">Dialogue 1-1: Formal Greetings<br>Dialogue 1-2: Informal Greetings and Farewells<br>Dialogue 1-3: Formal Introductions<br>Dialogue 1-4: Informal Introductions<br>Dialogue 1-5: What Time Is It?<br>Dialogue 1-6: A Telephone Call<br>Dialogue 1-7: Can You Say That Again?<br>Dialogue 1-8: Coincidences<br>Dialogue 1-9: Weather Report</div>
<div class="a sh" style="left:275px;top:182.5px">2. AROUND TOWN, PAGE 23</div>
<div class="a sl" style="left:275px;top:191px">Dialogue 2-1: Ordering a Meal<br>Dialogue 2-2: At the Doctor’s Office<br>Dialogue 2-3: Asking Directions<br>Dialogue 2-4: Calling for Help<br>Dialogue 2-5: At the Supermarket<br>Dialogue 2-6: Running Errands<br>Dialogue 2-7: At the Post Office<br>Dialogue 2-8: Catching Up After Class<br>Dialogue 2-9: Shopping<br>Dialogue 2-10: Transportation</div>
<div class="a sh" style="left:410px;top:250.5px">3. PASTIMES AND ACTIVITIES, PAGE 45</div>
<div class="a sl" style="left:410px;top:259px">Dialogue 3-1: How Old Are You?<br>Dialogue 3-2: At the Movies<br>Dialogue 3-3: What Are You Good At?<br>Dialogue 3-4: What’s Your Favorite Sport?<br>Dialogue 3-5: A Night at the Theater<br>Dialogue 3-6: Taking a Vacation<br>Dialogue 3-7: At the Pet Store<br>Dialogue 3-8: Giving Your Opinion<br>Dialogue 3-9: Hobbies<br>Dialogue 3-10: Weddings<br>Dialogue 3-11: Giving Advice</div>


</div>
<!-- right sidebar icons -->
<svg style="left:980px;top:152px" width="11" height="11" viewBox="0 0 11 11"><rect x="0.6" y="0.6" width="9.8" height="9.8" fill="none" stroke="#666" stroke-width="1.2"/><rect x="2.6" y="2.8" width="5.8" height="4.6" fill="none" stroke="#666" stroke-width="1"/></svg>
<svg style="left:980px;top:185px" width="12" height="12" viewBox="0 0 12 12"><path d="M6 4.5V0.6H0.6V6.5H4" fill="none" stroke="#999" stroke-width="1.1"/><circle cx="7.8" cy="7.8" r="3.6" fill="none" stroke="#999" stroke-width="1.1"/></svg>
<svg style="left:980px;top:220px" width="12" height="11" viewBox="0 0 12 11"><rect x="0.6" y="0.6" width="10.8" height="9.8" fill="none" stroke="#999" stroke-width="1.1"/><path d="M1 9l3-3 2 2 2-2 3 3" fill="none" stroke="#999" stroke-width="1"/><circle cx="3.5" cy="3.5" r="0.9" fill="#999"/></svg>
<div class="a" style="left:982px;top:251px;font-size:12px;line-height:14px;color:#aaa;font-weight:bold">¶</div>
<svg style="left:980px;top:287px" width="12" height="11" viewBox="0 0 12 11"><rect x="0.5" y="0.5" width="11" height="10" fill="none" stroke="#999" stroke-width="1"/><path d="M0.5 3.5h11M0.5 6h11M0.5 8.5h11M4 0.5v10M7.8 0.5v10" stroke="#999" stroke-width="0.9"/><rect x="0.5" y="0.5" width="11" height="2.5" fill="#999"/></svg>
<svg style="left:981px;top:320px" width="11" height="12" viewBox="0 0 11 12"><path d="M1.5 11V9M5.5 11V5.5M9.5 11V1" stroke="#999" stroke-width="1.8"/></svg>
<div class="a" style="left:980px;top:352px;font-size:10px;line-height:11px;color:#999">Ta</div>
<svg style="left:980px;top:362px" width="12" height="5" viewBox="0 0 12 5"><path d="M1 4Q6 -1 11 4" fill="none" stroke="#999" stroke-width="0.9"/></svg>

<!-- notes -->
<div class="a" style="left:192px;top:583px;font-family:'Liberation Serif',serif;font-weight:bold;font-size:8px;line-height:10px;color:#333">单击此处添加备注</div>
<div class="a" style="left:960px;top:637px;width:9px;height:9px;background:#fff"></div>
<svg style="left:962px;top:640px" width="6" height="4" viewBox="0 0 6 4"><path d="M0 0h6L3 4z" fill="#888"/></svg>

<!-- STATUS BAR -->
<div class="a" style="left:0;top:646px;width:1000px;height:20px;background:#dcdcdc"></div>

<svg style="left:18px;top:652px" width="11" height="10" viewBox="0 0 11 10"><rect x="0.6" y="0.6" width="9.8" height="6.3" fill="none" stroke="#666" stroke-width="1.2"/><path d="M5.5 7v2.5M3 9.5h5M3 3.5h5" stroke="#666" stroke-width="1"/></svg>
<svg style="left:35px;top:656px" width="5" height="3" viewBox="0 0 5 3"><path d="M0.5 0.5L2.5 2.5 4.5 0.5" fill="none" stroke="#666" stroke-width="0.8"/></svg>
<div class="a" style="left:59px;top:651px;font-size:10px;line-height:11px;color:#444;white-space:nowrap">幻灯片1/1</div>
<div class="a" style="left:129px;top:651px;font-size:10px;line-height:11px;color:#444;white-space:nowrap">中文（中国）</div>
<svg style="left:184px;top:656px" width="5" height="3" viewBox="0 0 5 3"><path d="M0.5 0.5L2.5 2.5 4.5 0.5" fill="none" stroke="#666" stroke-width="0.8"/></svg>
<svg style="left:200.5px;top:652.5px" width="10" height="10" viewBox="0 0 10 10"><circle cx="5" cy="5" r="4.3" fill="none" stroke="#555" stroke-width="0.9"/><path d="M5 0.7v8.6M0.7 5h8.6M1.5 3h7M1.5 7h7" stroke="#888" stroke-width="0.5"/></svg>
<div class="a" style="left:769px;top:647px;width:23px;height:19px;background:#a9a9a9"></div>
<div class="a" style="left:793px;top:647px;width:23px;height:19px;background:#a9a9a9"></div>
<div class="a" style="left:775px;top:651px;font-size:6px;line-height:7px;color:#fff;font-weight:bold;font-style:italic;letter-spacing:-0.3px">ABC</div>
<svg style="left:780px;top:655px" width="8" height="7" viewBox="0 0 8 7"><path d="M1 3.5l2 2.5L7 0.5" fill="none" stroke="#fff" stroke-width="1.1"/></svg>
<svg style="left:800px;top:651.5px" width="10" height="10" viewBox="0 0 10 10"><rect x="0.6" y="0.6" width="8.8" height="8.8" fill="none" stroke="#f2f2f2" stroke-width="1.1"/><path d="M3 3.2l1 1M7 3.2l-1 1M3 6.8l1-1M7 6.8l-1 1" stroke="#f2f2f2" stroke-width="0.8"/></svg>
<svg style="left:823px;top:652px" width="11" height="9" viewBox="0 0 11 9"><path d="M0.8 0v9M10.2 0v9" stroke="#555" stroke-width="1.4"/><path d="M1 1.5h9M1 7.5h9" stroke="#777" stroke-width="1.2"/></svg>
<div class="a" style="left:849px;top:656px;width:6px;height:2px;background:#444"></div>
<div class="a" style="left:860px;top:656px;width:75px;height:3px;border-radius:1.5px;background:#a3a3a3"></div>
<div class="a" style="left:893px;top:652px;width:10px;height:10px;border-radius:5px;background:#fafafa;border:1px solid #ddd"></div>
<div class="a" style="left:941px;top:656px;width:6px;height:2px;background:#444"></div>
<div class="a" style="left:943px;top:654px;width:2px;height:6px;background:#444"></div>
<div class="a" style="left:956px;top:651px;font-size:11px;line-height:12px;color:#555;white-space:nowrap">100%</div>
</div></body></html>
